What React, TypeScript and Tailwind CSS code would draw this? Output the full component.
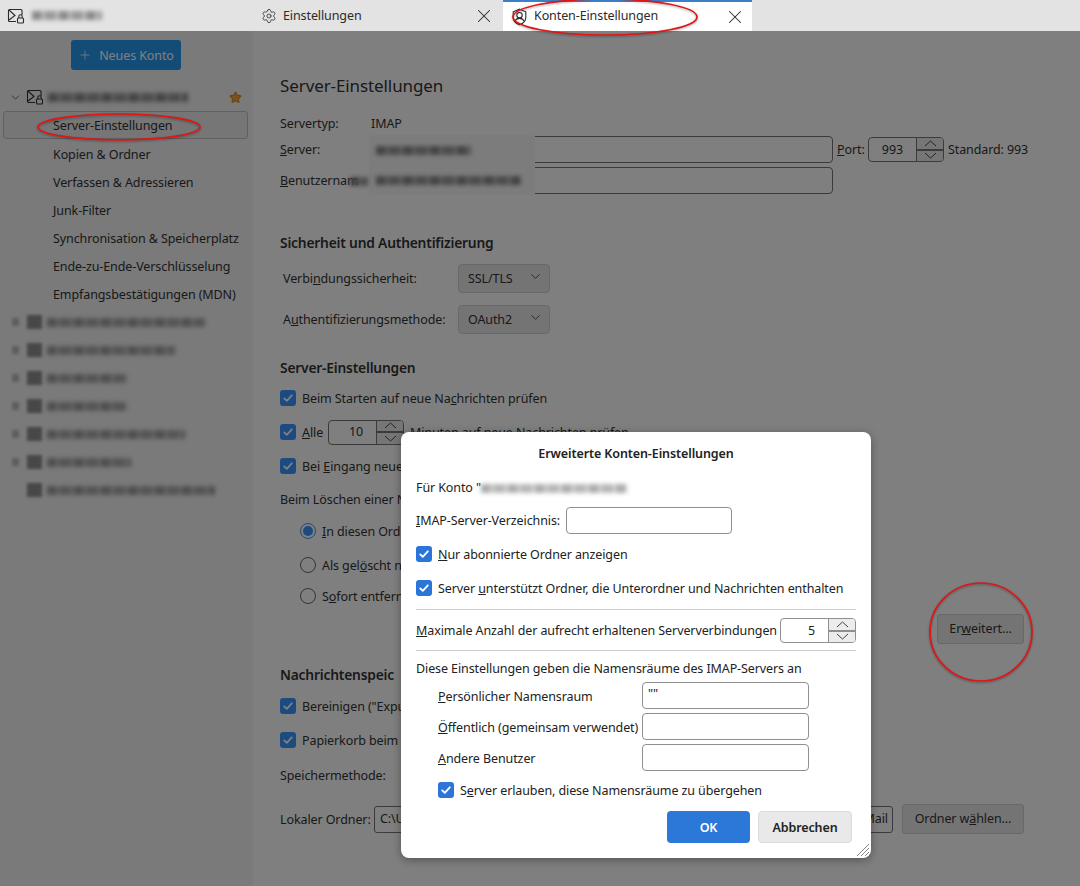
import { ChevronDown, Plus, Settings, Star, X } from "lucide-react";
import type { ReactNode } from "react";

const sidebarItems = [
  "Kopien & Ordner",
  "Verfassen & Adressieren",
  "Junk-Filter",
  "Synchronisation & Speicherplatz",
  "Ende-zu-Ende-Verschlüsselung",
  "Empfangsbestätigungen (MDN)",
];

const blurredAccounts = [
  { width: 158, arrow: true },
  { width: 128, arrow: true },
  { width: 80, arrow: true },
  { width: 80, arrow: true },
  { width: 138, arrow: true },
  { width: 84, arrow: true },
  { width: 168, arrow: false },
];

function MailIcon() {
  return (
    <svg width="18" height="18" viewBox="0 0 18 18" fill="none" stroke="currentColor" strokeWidth="1.1" className="shrink-0">
      <path d="M9 14.5H2.5A1 1 0 0 1 1.5 13.5V3.5A1 1 0 0 1 2.5 2.5H14A1 1 0 0 1 15 3.5V8" />
      <path d="M2 3l6 5.5L2 13" />
      <rect x="10.5" y="11" width="6" height="5" rx="1" />
      <path d="M11.8 11V9.5a1.7 1.7 0 0 1 3.4 0V11" />
    </svg>
  );
}

function ShieldIcon() {
  return (
    <svg width="17" height="18" viewBox="0 0 17 18" fill="none" stroke="currentColor" strokeWidth="1.1" className="shrink-0">
      <path d="M8.5 1.2L14.8 3.8V9.5C14.8 13 11.8 15.6 8.5 16.8C5.2 15.6 2.2 13 2.2 9.5V3.8Z" />
      <circle cx="8.5" cy="7.2" r="2.7" />
      <path d="M3.8 13.4C4.6 11.4 6.2 10.4 8.5 10.4S12.4 11.4 13.2 13.4" />
    </svg>
  );
}

function Smudge({ width, className = "" }: { width: number; className?: string }) {
  return (
    <div
      style={{ width }}
      className={`h-[9px] shrink-0 bg-[repeating-linear-gradient(90deg,#8a8a8a_0,#8a8a8a_9px,#b5b5b5_9px,#b5b5b5_13px,#999_13px,#999_24px,#c5c5c5_24px,#c5c5c5_27px)] blur-[2px] ${className}`}
    />
  );
}

function Check({ dim = false }: { dim?: boolean }) {
  return (
    <span className={`flex h-4 w-4 shrink-0 items-center justify-center rounded-[3px] ${dim ? "bg-[#3c96ff]" : "bg-[#2b74d8]"}`}>
      <svg width="12" height="12" viewBox="0 0 12 12" fill="none" stroke="white" strokeWidth="1.8" strokeLinecap="round" strokeLinejoin="round">
        <path d="M2.2 6.4l2.6 2.5 5-5.6" />
      </svg>
    </span>
  );
}

function Radio({ on = false }: { on?: boolean }) {
  return (
    <span className={`flex h-4 w-4 shrink-0 items-center justify-center rounded-full border ${on ? "border-[#3c96ff]" : "border-[#666]"}`}>
      {on && <span className="h-[10px] w-[10px] rounded-full bg-[#3c96ff]" />}
    </span>
  );
}

function CheckRow({ children, className = "" }: { children: ReactNode; className?: string }) {
  return (
    <div className={`flex h-6 items-center gap-[6px] whitespace-nowrap ${className}`}>
      <Check dim />
      <span className="pt-[2px]">{children}</span>
    </div>
  );
}

function RadioRow({ children, on = false, className = "" }: { children: ReactNode; on?: boolean; className?: string }) {
  return (
    <div className={`ml-5 flex h-6 items-center gap-[6px] whitespace-nowrap ${className}`}>
      <Radio on={on} />
      <span className="pt-[2px]">{children}</span>
    </div>
  );
}

function SpinArrow({ down = false }: { down?: boolean }) {
  return (
    <svg width="13" height="7" viewBox="0 0 13 7" fill="none" stroke="currentColor" strokeWidth="1">
      <path d={down ? "M1 1l5.5 5L12 1" : "M1 6l5.5-5L12 6"} />
    </svg>
  );
}

function Spinner({ value, width, dim = false }: { value: string; width: number; dim?: boolean }) {
  const border = dim ? "border-[#777]" : "border-[#8f8f8f]";
  return (
    <div style={{ width }} className={`flex h-[25px] shrink-0 rounded-[4px] border bg-white ${border}`}>
      <div className="flex flex-1 items-center justify-end pr-[13px] pt-[1px]">{value}</div>
      <div className={`flex w-[27px] flex-col overflow-hidden rounded-r-[3px] border-l ${border} bg-[#ececec] text-[#444]`}>
        <div className="flex min-h-0 flex-1 items-center justify-center">
          <SpinArrow />
        </div>
        <div className={`flex min-h-0 flex-1 items-center justify-center border-t-2 ${border}`}>
          <SpinArrow down />
        </div>
      </div>
    </div>
  );
}

function Select({ value, className = "" }: { value: string; className?: string }) {
  return (
    <div className={`flex h-[29px] w-[92px] items-center justify-between rounded-[4px] border border-[#d0d0d0] bg-[#e9e9e9] pl-[9px] pr-[6px] ${className}`}>
      <span className="pt-[2px]">{value}</span>
      <ChevronDown size={15} strokeWidth={1.3} className="-mt-1" />
    </div>
  );
}

function TextBox({ value = "", className = "" }: { value?: string; className?: string }) {
  return <div className={`h-[27px] shrink-0 rounded-[4px] border border-[#8f8f8f] bg-white px-[5px] leading-[22px] ${className}`}>{value}</div>;
}

function Sidebar() {
  return (
    <aside className="flex w-[253px] shrink-0 flex-col bg-[#f4f4f4] pl-[3px] pr-[5px]">
      <button className="ml-[68px] mt-[9px] flex h-[30px] w-[110px] items-center justify-center gap-[7px] rounded-[3px] bg-[#2898f0] text-white">
        <Plus size={14} strokeWidth={1.3} />
        <span className="pt-[2px]">Neues Konto</span>
      </button>
      <div className="mt-[13px] flex h-[28px] items-center">
        <ChevronDown size={13} strokeWidth={1.3} className="ml-[6px]" />
        <span className="ml-[4px]">
          <MailIcon />
        </span>
        <Smudge width={140} className="ml-[4px]" />
        <Star size={13} className="ml-[41px] fill-[#f5a742] text-[#d98520]" />
      </div>
      <div className="flex h-[28px] items-center rounded-[3px] border border-[#c0c0c0] bg-[#ececec] pl-[49px] pt-[3px]">Server-Einstellungen</div>
      {sidebarItems.map((item) => (
        <div key={item} className="flex h-[28px] items-center whitespace-nowrap pl-[50px] pt-[4px]">
          {item}
        </div>
      ))}
      <div className="h-[1px]" />
      {blurredAccounts.map((account, i) => (
        <div key={i} className="flex h-[28px] items-center opacity-80">
          <div className={`ml-[9px] h-[8px] w-[7px] blur-[1.5px] ${account.arrow ? "bg-[#b0b0b0]" : ""}`} />
          <div className="ml-[8px] h-[14px] w-[15px] bg-[#777] blur-[1.5px]" />
          <Smudge width={account.width} className="ml-[5px]" />
        </div>
      ))}
    </aside>
  );
}

function SettingsPane() {
  return (
    <main className="flex w-[827px] shrink-0 flex-col bg-white pl-[27px] pr-[56px]">
      <h1 className="mt-[41px] h-[28px] text-[17px] leading-[28px] tracking-[-0.1px]">Server-Einstellungen</h1>
      <div className="mt-[13px] flex h-5 items-center pt-[2px]">
        <span className="w-[91px]">Servertyp:</span>
        <span>IMAP</span>
      </div>
      <div className="mt-[3px] flex items-center">
        <span className="w-[90px] shrink-0 pt-[2px]">
          <u>S</u>erver:
        </span>
        <TextBox className="w-[463px] border-[#777]" />
        <span className="ml-[4px] w-[31px] shrink-0 pt-[2px]">
          <u>P</u>ort:
        </span>
        <Spinner value="993" width={76} dim />
        <span className="ml-[4px] shrink-0 whitespace-nowrap pt-[2px]">Standard: 993</span>
      </div>
      <div className="mt-[4px] flex items-center">
        <span className="w-[90px] shrink-0 whitespace-nowrap pt-[2px]">
          <u>B</u>enutzernam
        </span>
        <TextBox className="w-[463px] border-[#777]" />
      </div>
      <h2 className="mt-[38px] h-[22px] text-[13.8px] font-semibold leading-[22px] tracking-[-0.2px]">Sicherheit und Authentifizierung</h2>
      <div className="ml-[3px] mt-[10px] flex items-center">
        <span className="w-[175px] pt-[2px]">
          Verbi<u>n</u>dungssicherheit:
        </span>
        <Select value="SSL/TLS" />
      </div>
      <div className="ml-[3px] mt-[12px] flex items-center">
        <span className="w-[175px] whitespace-nowrap pt-[2px]">
          A<u>u</u>thentifizierungsmethode:
        </span>
        <Select value="OAuth2" />
      </div>
      <h2 className="mt-[23px] h-[22px] text-[13.8px] font-semibold leading-[22px] tracking-[-0.2px]">Server-Einstellungen</h2>
      <CheckRow className="mt-[7px]">
        Beim Starten auf neue Na<u>c</u>hrichten prüfen
      </CheckRow>
      <div className="mt-[10px] flex h-6 items-center gap-[6px] whitespace-nowrap">
        <Check dim />
        <span className="w-[20px] pt-[2px]">
          <u>A</u>lle
        </span>
        <Spinner value="10" width={76} dim />
        <span className="pt-[2px]">Minuten auf neue Nachrichten prüfen</span>
      </div>
      <CheckRow className="mt-[10px]">
        Bei <u>E</u>ingang neue
      </CheckRow>
      <div className="mt-[12px] flex h-5 items-center pt-[1px]">Beim Löschen einer N</div>
      <RadioRow on className="mt-[9px]">
        <u>I</u>n diesen Ord
      </RadioRow>
      <RadioRow className="mt-[10px]">
        Als gel<u>ö</u>scht n
      </RadioRow>
      <RadioRow className="mt-[7px]">
        S<u>o</u>fort entfern
      </RadioRow>
      <div className="mt-[6px] flex justify-end">
        <button className="h-[30px] w-[87px] rounded-[3px] border border-[#d0d0d0] bg-[#e9e9e9] pt-[1px]">
          Er<u>w</u>eitert...
        </button>
      </div>
      <h2 className="mt-[20px] h-[22px] whitespace-nowrap text-[13.8px] font-semibold leading-[22px] tracking-[-0.2px]">Nachrichtenspeic</h2>
      <CheckRow className="mt-[8px]">Bereinigen ("Expu</CheckRow>
      <CheckRow className="mt-[10px]">Papierkorb beim</CheckRow>
      <div className="mt-[14px] flex h-5 items-center pt-[1px]">Speichermethode:</div>
      <div className="mt-[18px] flex items-center">
        <span className="w-[94px] shrink-0 whitespace-nowrap pt-[2px]">Lokaler Ordner:</span>
        <div className="flex h-[27px] w-[519px] shrink-0 items-center justify-between rounded-[3px] border border-[#777] px-[5px] pt-[1px]">
          <span>C:\U</span>
          <span className="-mr-[1px]">Mail</span>
        </div>
        <button className="ml-[9px] h-[30px] w-[122px] shrink-0 whitespace-nowrap rounded-[3px] border border-[#d0d0d0] bg-[#e9e9e9] pt-[1px]">
          Ordner w<u>ä</u>hlen...
        </button>
      </div>
    </main>
  );
}

function ModalCheck({ children, className = "" }: { children: ReactNode; className?: string }) {
  return (
    <div className={`flex h-6 items-center gap-[6px] whitespace-nowrap ${className}`}>
      <Check />
      <span className="pt-[2px]">{children}</span>
    </div>
  );
}

function AdvancedDialog() {
  return (
    <div className="absolute left-[401px] top-[432px] flex h-[426px] w-[470px] flex-col rounded-[8px] bg-white px-[15px] text-[#222] shadow-[0_2px_10px_rgba(0,0,0,0.35)]">
      <h3 className="mt-[12px] h-5 text-center font-semibold leading-5">Erweiterte Konten-Einstellungen</h3>
      <div className="mt-[13px] flex h-5 items-center pt-[2px]">
        Für Konto "
        <Smudge width={146} className="opacity-70" />
      </div>
      <div className="mt-[10px] flex items-center">
        <span className="w-[150px] whitespace-nowrap pt-[2px]">
          <u>I</u>MAP-Server-Verzeichnis:
        </span>
        <TextBox className="w-[166px]" />
      </div>
      <ModalCheck className="mt-[8px]">
        <u>N</u>ur abonnierte Ordner anzeigen
      </ModalCheck>
      <ModalCheck className="mt-[10px]">
        Server <u>u</u>nterstützt Ordner, die Unterordner und Nachrichten enthalten
      </ModalCheck>
      <hr className="mt-[9px] border-[#cfcfcf]" />
      <div className="mt-[8px] flex items-center justify-between">
        <span className="whitespace-nowrap pt-[2px]">
          <u>M</u>aximale Anzahl der aufrecht erhaltenen Serververbindungen
        </span>
        <Spinner value="5" width={76} />
      </div>
      <hr className="mt-[7px] border-[#cfcfcf]" />
      <div className="mt-[7px] flex h-5 items-center whitespace-nowrap pt-[2px]">Diese Einstellungen geben die Namensräume des IMAP-Servers an</div>
      <div className="ml-[22px] mt-[4px] flex flex-col gap-[4px]">
        <div className="flex items-center">
          <span className="w-[204px] pt-[3px]">
            <u>P</u>ersönlicher Namensraum
          </span>
          <TextBox value={'""'} className="w-[167px]" />
        </div>
        <div className="flex items-center">
          <span className="w-[204px] whitespace-nowrap pt-[3px]">
            <u>Ö</u>ffentlich (gemeinsam verwendet)
          </span>
          <TextBox className="w-[167px]" />
        </div>
        <div className="flex items-center">
          <span className="w-[204px] pt-[3px]">
            <u>A</u>ndere Benutzer
          </span>
          <TextBox className="w-[167px]" />
        </div>
        <ModalCheck className="mt-[3px]">
          S<u>e</u>rver erlauben, diese Namensräume zu übergehen
        </ModalCheck>
      </div>
      <div className="mt-[9px] flex justify-end gap-2 pr-[4px]">
        <button className="h-[32px] w-[83px] rounded-[4px] bg-[#2b78d8] pt-[2px] font-semibold text-white">OK</button>
        <button className="h-[32px] w-[94px] rounded-[4px] border border-[#dcdcdc] bg-[#e9e9e9] pt-[2px] font-semibold">Abbrechen</button>
      </div>
      <svg width="14" height="14" viewBox="0 0 14 14" stroke="#888" className="absolute bottom-[1px] right-[1px]">
        <path d="M1 13L13 1M5 13L13 5M9 13L13 9" />
      </svg>
    </div>
  );
}

export default function App() {
  return (
    <div className="relative flex h-[886px] w-[1080px] flex-col overflow-hidden bg-white font-['Noto_Sans','Liberation_Sans',sans-serif] text-[12.5px] tracking-[-0.1px] text-[#333]">
      <header className="flex h-[31px] shrink-0 bg-[#e3e3e3] text-[#2b2b2b]">
        <div className="flex w-[252px] items-center pl-[7px]">
          <MailIcon />
          <Smudge width={70} className="ml-[7px]" />
        </div>
        <div className="flex w-[251px] items-center pl-[9px]">
          <Settings size={16} strokeWidth={1.2} />
          <span className="ml-[6px] pt-[2px]">Einstellungen</span>
          <X size={22} strokeWidth={1.1} className="ml-auto mr-[8px]" />
        </div>
        <div className="flex w-[249px] items-center border-t-2 border-[#3a7fc8] bg-white pl-[8px]">
          <ShieldIcon />
          <span className="ml-[6px]">Konten-Einstellungen</span>
          <X size={22} strokeWidth={1.1} className="ml-auto mr-[6px]" />
        </div>
      </header>
      <div className="flex flex-1">
        <Sidebar />
        <SettingsPane />
      </div>
      <div className="absolute left-[350px] top-[135px] h-[60px] w-[185px]">
        <div className="ml-[19px] flex h-[60px] w-[166px] flex-col justify-around bg-[#f8f8f8] pl-[7px]">
          <Smudge width={95} />
          <Smudge width={145} />
        </div>
        <Smudge width={18} className="absolute left-0 top-[42px]" />
      </div>
      <div className="absolute inset-x-0 bottom-0 top-[31px] bg-black/50" />
      <AdvancedDialog />
      <svg
        width="1080"
        height="886"
        fill="none"
        stroke="#e01515"
        strokeWidth="1.7"
        className="pointer-events-none absolute left-0 top-0 drop-shadow-[0_1px_1px_rgba(0,0,0,0.35)]"
      >
        <ellipse cx="605" cy="17" rx="92" ry="18" />
        <ellipse cx="119" cy="127" rx="81" ry="13" />
        <ellipse cx="981" cy="632" rx="51" ry="49" />
      </svg>
    </div>
  );
}
